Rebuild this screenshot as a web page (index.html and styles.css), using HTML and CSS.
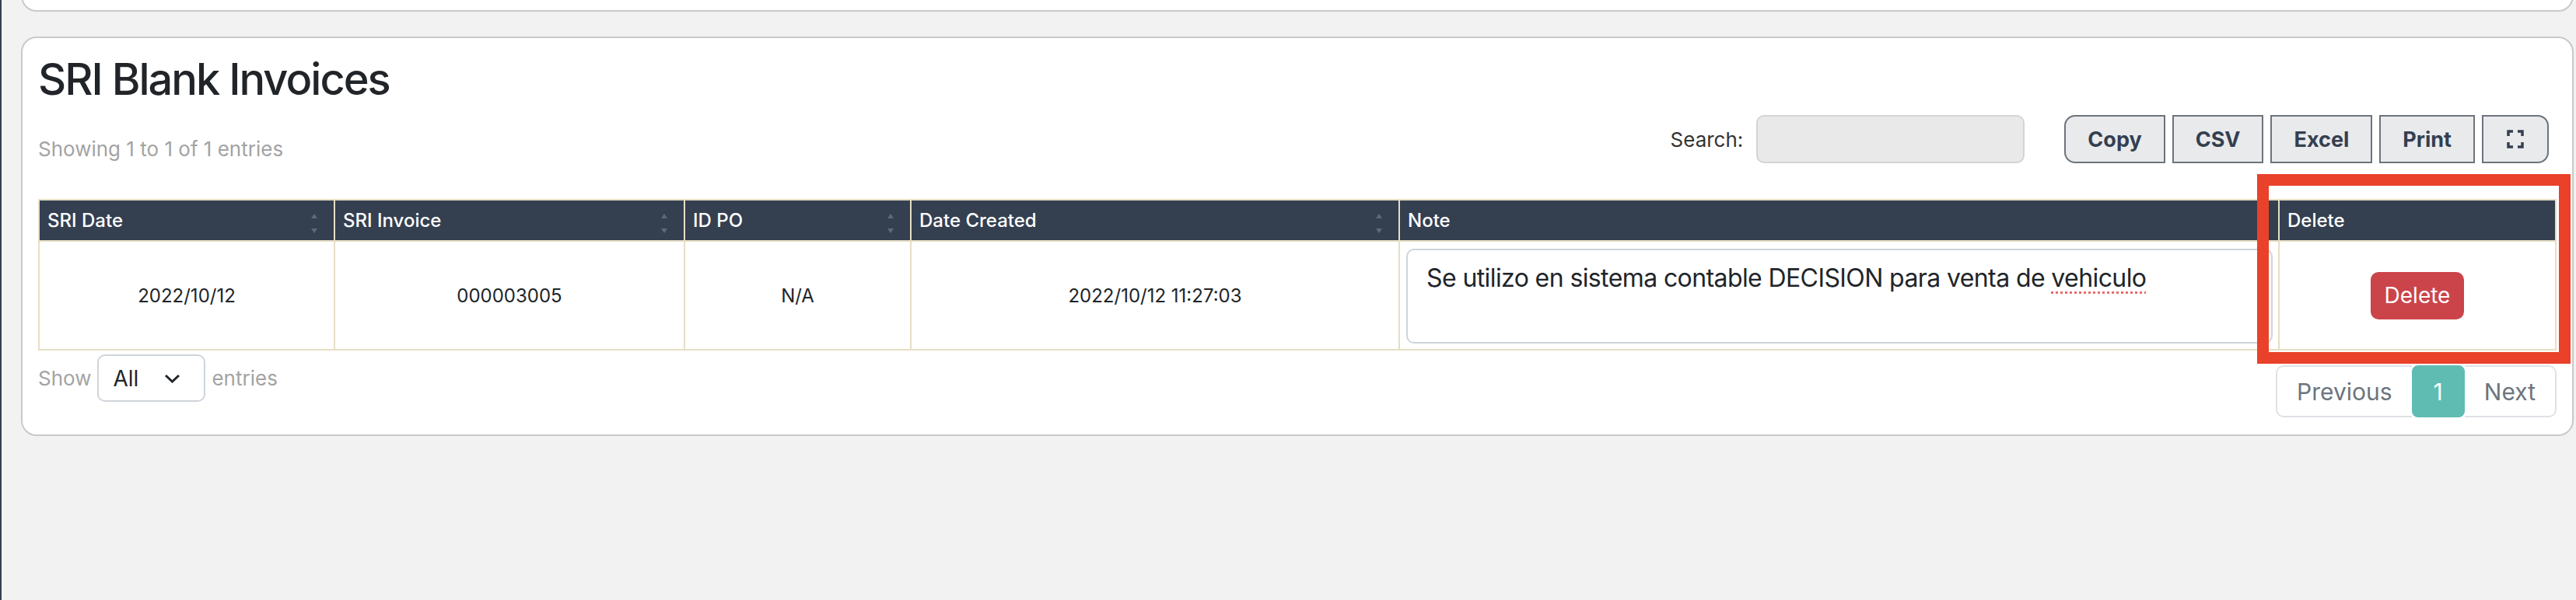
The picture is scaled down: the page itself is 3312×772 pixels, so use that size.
FILE: index.html
```html
<!DOCTYPE html>
<html>
<head>
<link rel="stylesheet" href="styles.css">
</head>
<body>

<div class="layout">
  <div class="sidebar"></div>

  <div class="main">
    <div class="card card-top"></div>

    <div class="card">
      <h2 class="card-title">SRI Blank Invoices</h2>

      <div class="toolbar">
        <div class="table-info">Showing 1 to 1 of 1 entries</div>
        <div class="toolbar-right">
          <label class="search">Search: <input type="text" class="search-input"></label>
          <div class="btn-group">
            <button class="btn-export">Copy</button>
            <button class="btn-export">CSV</button>
            <button class="btn-export">Excel</button>
            <button class="btn-export">Print</button>
            <button class="btn-export btn-full">
              <svg width="22" height="24" viewBox="0 0 22 24" fill="none" stroke="#343f50" stroke-width="3.5">
                <path d="M2 8V2h6M14 2h6v6M20 16v6h-6M8 22H2v-6"/>
              </svg>
            </button>
          </div>
        </div>
      </div>

      <table class="data-table">
        <colgroup>
          <col style="width: 380px">
          <col style="width: 450px">
          <col style="width: 291px">
          <col style="width: 628px">
          <col style="width: 1131px">
          <col style="width: 356px">
        </colgroup>
        <thead>
          <tr>
            <th class="sorting">SRI Date</th>
            <th class="sorting">SRI Invoice</th>
            <th class="sorting">ID PO</th>
            <th class="sorting">Date Created</th>
            <th>Note</th>
            <th>Delete</th>
          </tr>
        </thead>
        <tbody>
          <tr>
            <td>2022/10/12</td>
            <td>000003005</td>
            <td>N/A</td>
            <td>2022/10/12 11:27:03</td>
            <td class="note-cell">
              <div class="note-box">Se utilizo en sistema contable DECISION para venta de <span class="misspelled">vehiculo</span>
                <svg class="grip" width="10" height="10" viewBox="0 0 10 10" stroke="#8a8a8a" stroke-width="1.2">
                  <path d="M9 2L2 9M9 6L6 9"/>
                </svg>
              </div>
            </td>
            <td><button class="btn-delete">Delete</button></td>
          </tr>
        </tbody>
      </table>

      <div class="table-footer">
        <div class="length">
          Show
          <span class="length-select">All
            <svg width="21" height="12" viewBox="0 0 21 12" fill="none" stroke="#212529" stroke-width="3">
              <path d="M2 2l8.5 8L19 2"/>
            </svg>
          </span>
          entries
        </div>
        <div class="pagination">
          <span class="page-item first">Previous</span>
          <span class="page-item active">1</span>
          <span class="page-item last">Next</span>
        </div>
      </div>
    </div>
  </div>

  <!-- annotation drawn over the Delete column -->
  <div class="highlight"></div>
</div>

</body>
</html>
```

FILE: styles.css
```css
body {
    margin: 0;
    background-color: #f2f2f2;
    font-family: "Inter", "Liberation Sans", sans-serif;
    color: #212529;
}

.layout {
    position: relative;
    display: flex;
    min-height: 772px;
    overflow: hidden;
}

.sidebar {
    width: 4px;
    background-color: #343f50;
}

.main {
    flex: 1;
    padding: 0 3px 0 25px;
}

/* Cards */
.card {
    background-color: #fff;
    border: 2px solid #c9c9c9;
    border-radius: 20px;
    margin-top: 32px;
    padding: 20px 20px 22px;
}

.card-top {
    height: 60px;
    margin-top: -49px;
    padding: 0;
}

.card-title {
    margin: 0;
    font-size: 56px;
    font-weight: 500;
    line-height: 1.2;
    letter-spacing: -2px;
}

/* Toolbar above table */
.toolbar {
    display: flex;
    justify-content: space-between;
    align-items: flex-end;
    margin-top: 12px;
}

.table-info {
    font-size: 26px;
    color: #a3a3a3;
    line-height: 36px;
}

.toolbar-right {
    display: flex;
    align-items: center;
    margin-right: 10px;
}

.search {
    display: flex;
    align-items: center;
    font-size: 26px;
    color: #333;
    margin-right: 51px;
}

.search-input {
    width: 345px;
    height: 62px;
    box-sizing: border-box;
    margin-left: 17px;
    background-color: #e9e9e9;
    border: 2px solid #d2d4d7;
    border-radius: 10px;
    outline: none;
}

.btn-group {
    display: flex;
    gap: 9px;
}

.btn-export {
    height: 62px;
    padding: 0 28px;
    font-family: inherit;
    font-size: 27px;
    font-weight: 700;
    color: #343f50;
    background-color: #e9eaec;
    border: 2px solid #6c737c;
    border-radius: 0;
}

.btn-export:first-child {
    border-radius: 14px 0 0 14px;
}

.btn-export:last-child {
    border-radius: 0 14px 14px 0;
}

.btn-full {
    width: 86px;
    padding: 0;
    display: flex;
    align-items: center;
    justify-content: center;
}

/* Table */
.data-table {
    width: 100%;
    margin-top: 46px;
    border-collapse: collapse;
    table-layout: fixed;
}

.data-table th,
.data-table td {
    border: 2px solid #e6dfc4;
}

.data-table th {
    position: relative;
    height: 51px;
    padding: 0 10px;
    background-color: #343f50;
    color: #fff;
    font-size: 24px;
    font-weight: 500;
    text-align: left;
}

.data-table th.sorting::before,
.data-table th.sorting::after {
    content: "";
    position: absolute;
    right: 21px;
    border-left: 4px solid transparent;
    border-right: 4px solid transparent;
}

.data-table th.sorting::before {
    top: 17px;
    border-bottom: 6px solid rgba(255, 255, 255, 0.22);
}

.data-table th.sorting::after {
    top: 36px;
    border-top: 6px solid rgba(255, 255, 255, 0.22);
}

.data-table td {
    height: 138px;
    padding: 0;
    font-size: 24px;
    text-align: center;
    vertical-align: middle;
}

.data-table td.note-cell {
    height: 122px;
    padding: 9px 7px 7px 8px;
    text-align: left;
}

.note-box {
    position: relative;
    height: 122px;
    box-sizing: border-box;
    padding: 12px 24px;
    border: 2px solid #ced4da;
    border-radius: 10px;
    font-size: 32px;
    line-height: 48px;
    letter-spacing: -0.6px;
    color: #212529;
}

.misspelled {
    text-decoration: underline dotted #ec6b6b;
    text-decoration-thickness: 3px;
    text-underline-offset: 6px;
}

.grip {
    position: absolute;
    right: 3px;
    bottom: 3px;
}

.btn-delete {
    height: 61px;
    padding: 0 18px;
    font-family: inherit;
    font-size: 28px;
    color: #fff;
    background-color: #cb444a;
    border: none;
    border-radius: 10px;
}

/* Footer under table */
.table-footer {
    display: flex;
    justify-content: space-between;
    align-items: flex-start;
    margin-top: 5px;
}

.length {
    display: flex;
    align-items: center;
    gap: 8px;
    font-size: 26px;
    color: #a3a3a3;
}

.length-select {
    display: flex;
    align-items: center;
    justify-content: space-between;
    width: 139px;
    height: 61px;
    box-sizing: border-box;
    padding: 0 30px 0 18px;
    border: 2px solid #ced4da;
    border-radius: 10px;
    font-size: 28px;
    color: #212529;
}

.pagination {
    display: flex;
    margin-top: 14px;
}

.page-item {
    height: 67px;
    box-sizing: border-box;
    padding: 0 25px;
    display: flex;
    align-items: center;
    font-size: 30px;
    color: #6c757d;
    border: 2px solid #dee2e6;
}

.page-item.first {
    border-radius: 10px 0 0 10px;
    border-right: none;
}

.page-item.last {
    border-radius: 0 10px 10px 0;
    border-left: none;
}

.page-item.active {
    padding: 0 26px;
    background-color: #5fbcb3;
    border-color: #5fbcb3;
    border-radius: 8px;
    color: #fff;
}

/* Red annotation rectangle */
.highlight {
    position: absolute;
    left: 2902px;
    top: 224px;
    width: 403px;
    height: 244px;
    box-sizing: border-box;
    border: 15px solid #e9412a;
}
```
